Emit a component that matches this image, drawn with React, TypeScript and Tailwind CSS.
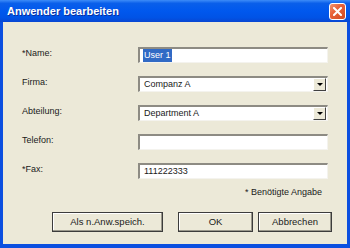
import React from 'react';

const font = { fontFamily: '"Liberation Sans", Arial, sans-serif' };

const Field: React.FC<{ children?: React.ReactNode; combo?: boolean }> = ({ children, combo }) => (
  <div className="relative w-[190px] h-[16px] bg-white border-t-2 border-l-2 border-t-[#8d8b83] border-l-[#8d8b83] border-b border-r border-b-[#f4f3ee] border-r-[#f4f3ee] flex items-center pl-[4px] text-[9px] text-[#1a1a1a]">
    {children}
    {combo && (
      <div className="absolute right-[1px] top-0 bottom-0 w-[13px] bg-[#ece9d8] border border-t-white border-l-white border-b-[#404040] border-r-[#404040] flex items-center justify-center">
        <div className="w-0 h-0 border-l-[3px] border-r-[3px] border-t-[3px] border-l-transparent border-r-transparent border-t-black" />
      </div>
    )}
  </div>
);

const Row: React.FC<{ label: string; children: React.ReactNode }> = ({ label, children }) => (
  <div className="flex items-start h-[16px]">
    <div className="w-[116px] text-[9px] leading-[13px] text-[#1a1a1a]">{label}</div>
    {children}
  </div>
);

const Btn: React.FC<{ label: string; w: string }> = ({ label, w }) => (
  <button
    className={`${w} h-[20px] bg-[#ece9d8] border border-[#3c3c3c] shadow-[inset_-1px_-1px_0_#9a988c,inset_1px_1px_0_#ffffff] text-[9.5px] text-[#1a1a1a] flex items-center justify-center`}
  >
    {label}
  </button>
);

export default function App() {
  return (
    <div style={font} className="w-[350px] h-[248px] flex flex-col bg-[#0b4fe0] overflow-hidden">
      <div className="h-[22px] flex items-center justify-between pl-[7px] pr-[4px] bg-[linear-gradient(to_bottom,#3d8cf8_0%,#0a5fea_15%,#0058ee_50%,#0053e6_80%,#0846d2_100%)]">
        <span className="text-white font-bold text-[11px] [text-shadow:1px_1px_0_#0a2f9e]">
          Anwender bearbeiten
        </span>
        <div className="w-[17px] h-[17px] rounded-[3px] border border-white bg-[linear-gradient(135deg,#f3946f_0%,#e8633a_40%,#cf4a22_100%)] flex items-center justify-center">
          <svg width="9" height="9" viewBox="0 0 9 9">
            <path d="M1 1 L8 8 M8 1 L1 8" stroke="white" strokeWidth="2" strokeLinecap="square" />
          </svg>
        </div>
      </div>
      <div className="flex-1 mx-[3px] mb-[4px] bg-[#ece9d8] flex flex-col pt-[25px] pl-[19px]">
        <div className="flex flex-col gap-[13px]">
          <Row label="*Name:">
            <Field>
              <span className="bg-[#316ac5] text-white px-[1px] -ml-[1px]">User 1</span>
            </Field>
          </Row>
          <Row label="Firma:">
            <Field combo>Companz A</Field>
          </Row>
          <Row label="Abteilung:">
            <Field combo>Department A</Field>
          </Row>
          <Row label="Telefon:">
            <Field />
          </Row>
          <Row label="*Fax:">
            <Field>111222333</Field>
          </Row>
        </div>
        <div className="mt-[7px] pr-[25px] text-right text-[9px] leading-[13px] text-[#1a1a1a]">* Benötigte Angabe</div>
        <div className="mt-[13px] pl-[30px] flex">
          <Btn label="Als n.Anw.speich." w="w-[111px]" />
          <div className="w-[15px]" />
          <Btn label="OK" w="w-[75px]" />
          <div className="w-[5px]" />
          <Btn label="Abbrechen" w="w-[74px]" />
        </div>
      </div>
    </div>
  );
}
